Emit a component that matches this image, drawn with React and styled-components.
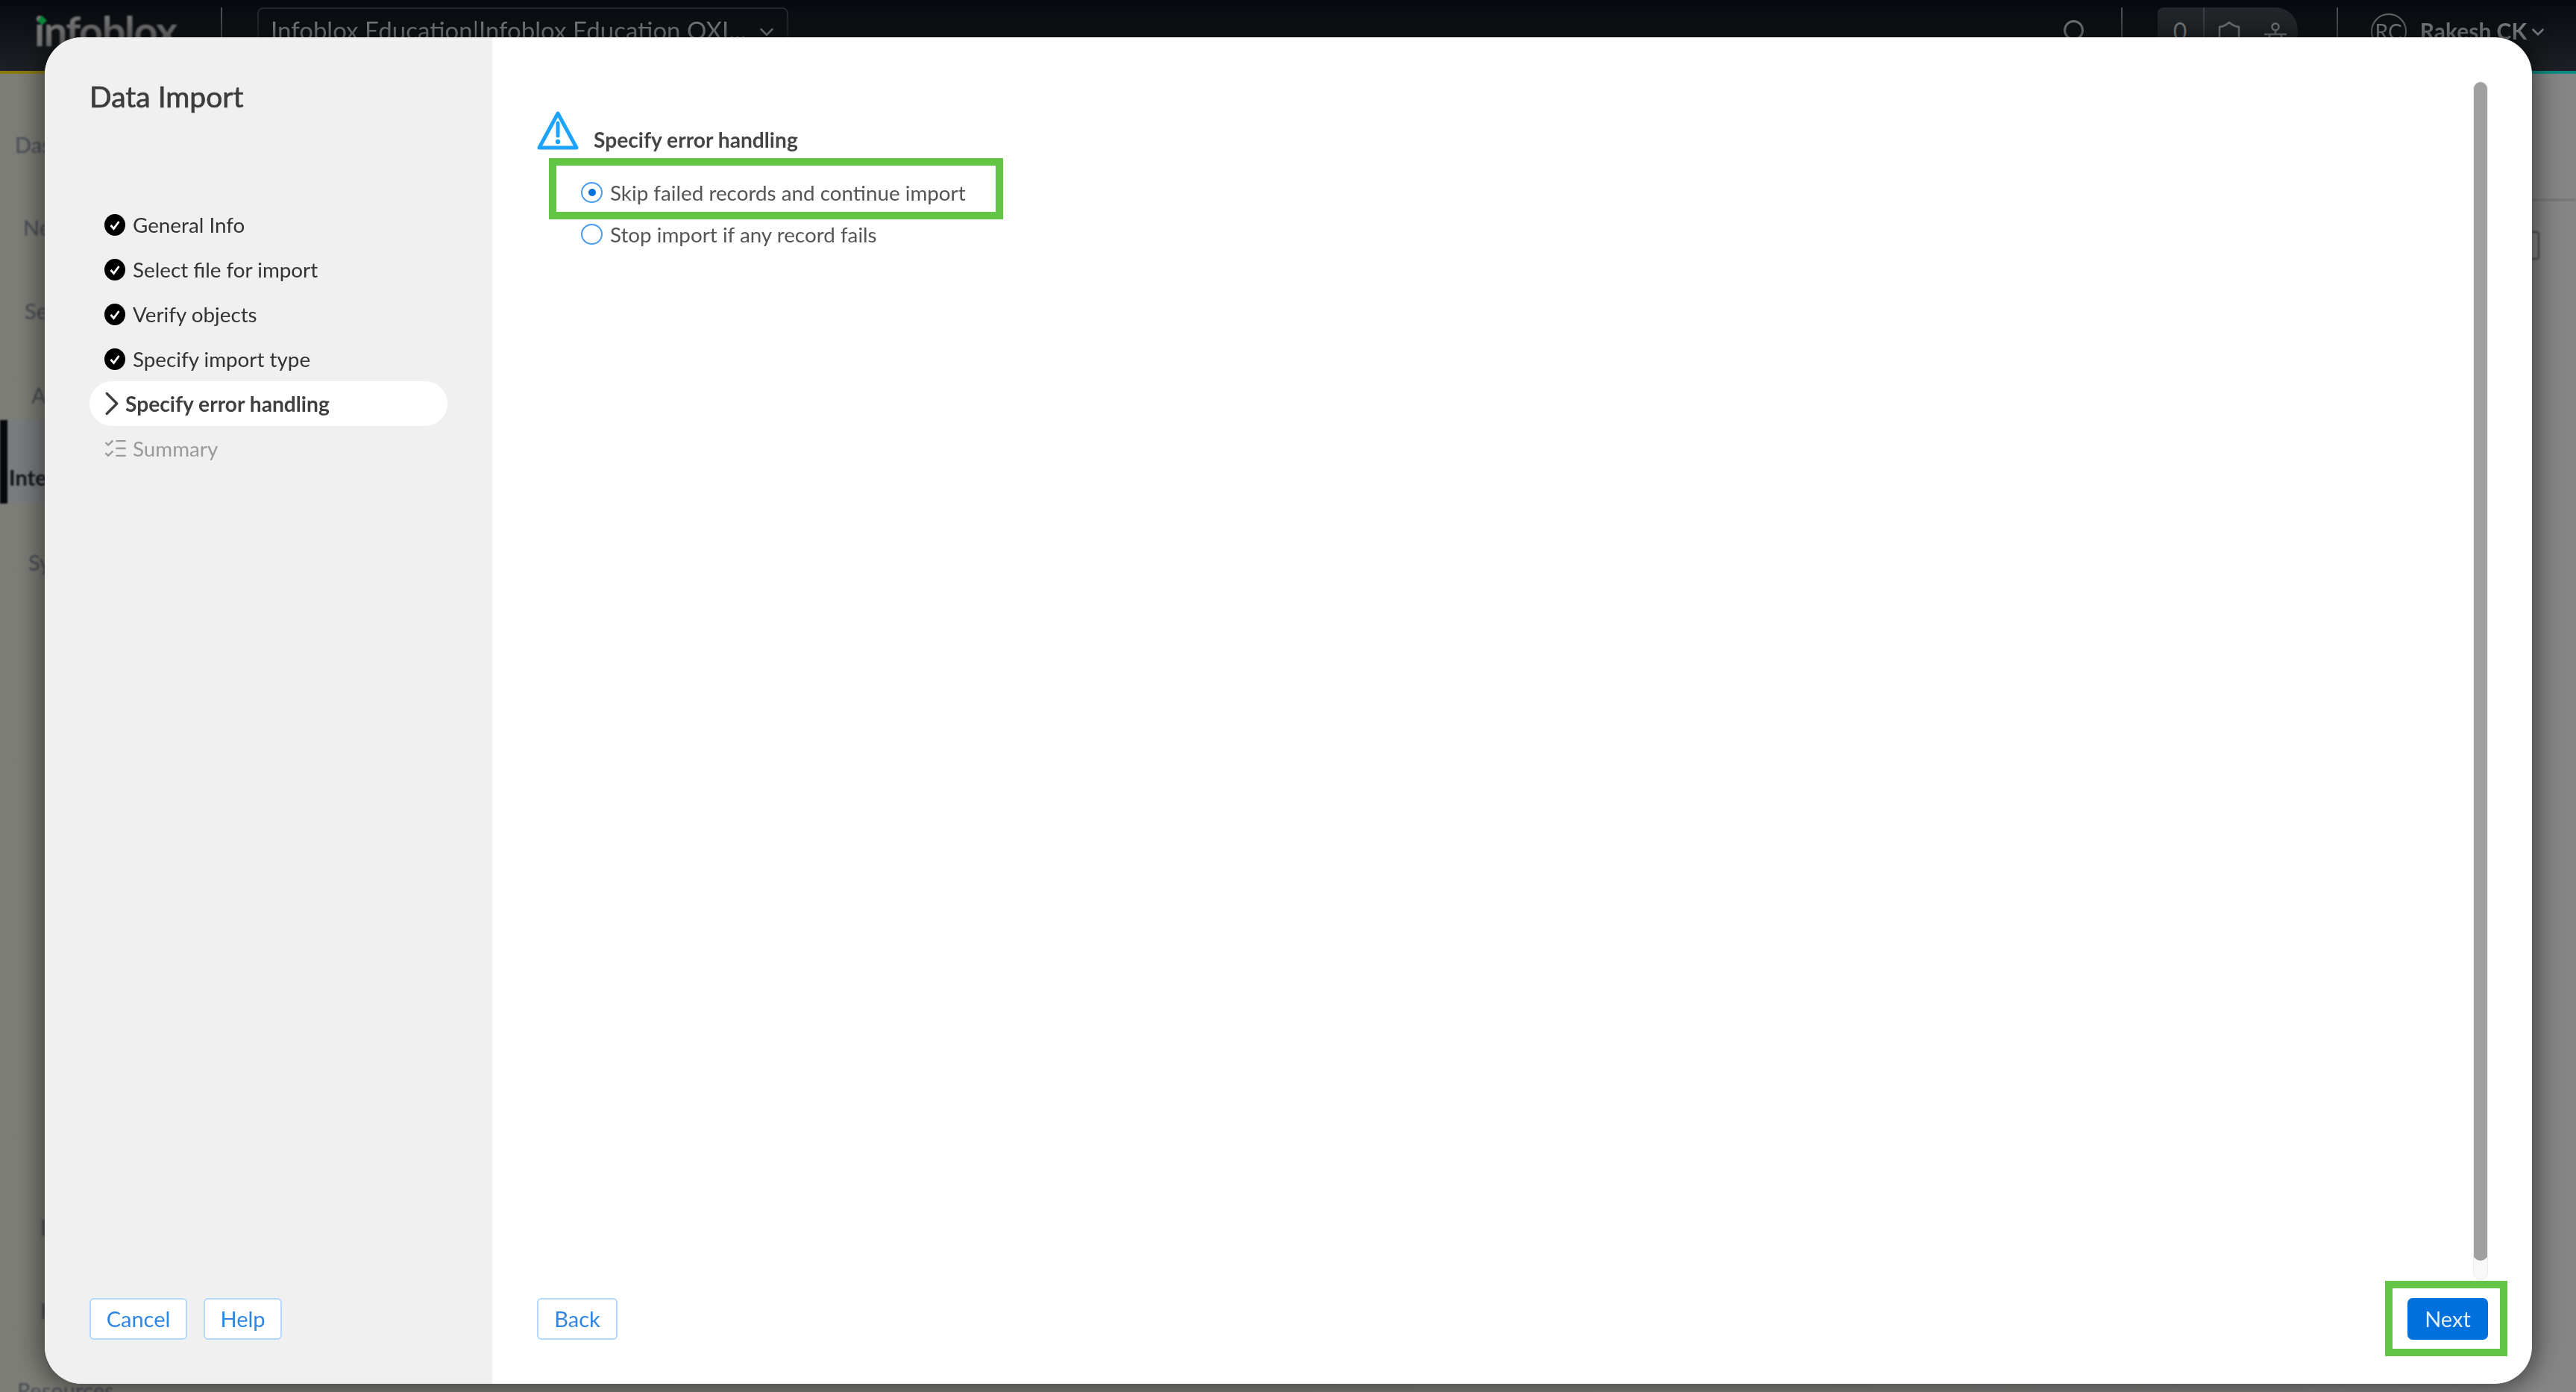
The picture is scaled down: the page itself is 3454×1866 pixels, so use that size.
import React from "react";
import styled, { createGlobalStyle } from "styled-components";
import { ChevronDown, ChevronRight, ListChecks, Search } from "lucide-react";

const Global = createGlobalStyle`
  html, body { margin: 0; padding: 0; background: #808080; }
  body { font-family: Lato, "Noto Sans", sans-serif; overflow: hidden; }
`;

const Page = styled.div`
  position: relative;
  width: 3454px;
  height: 1866px;
  overflow: hidden;
  display: flex;
  flex-direction: column;
  background: linear-gradient(90deg, #7e7e78 0%, #7f7f7b 50%, #868686 100%);
`;

const Header = styled.header`
  height: 95px;
  flex: none;
  display: flex;
  align-items: flex-start;
  box-sizing: content-box;
  color: #7d8084;
  background: linear-gradient(180deg, #06090d 0%, #1d2125 100%);
  border-bottom: 4px solid;
  border-image: linear-gradient(90deg, #8c7a12 0%, #6b8a50 50%, #0c8a86 100%) 1;
`;

const Logo = styled.div`
  position: relative;
  margin: 6px 0 0 46px;
  width: 250px;
  font-size: 56px;
  font-weight: 700;
  line-height: 70px;
  letter-spacing: -1.5px;
  color: #7a7a7a;
  filter: blur(0.8px);
`;

const LogoDot = styled.span`
  position: absolute;
  left: 6px;
  top: 17px;
  width: 9px;
  height: 9px;
  background: #0b8a3a;
  transform: rotate(45deg);
`;

const HeadDivider = styled.span`
  width: 2px;
  height: 42px;
  margin-top: 10px;
  flex: none;
  background: #4b4e52;
`;

const Selector = styled.div`
  margin: 10px 0 0 47px;
  width: 712px;
  height: 70px;
  box-sizing: border-box;
  padding: 8px 12px 0 16px;
  display: flex;
  justify-content: space-between;
  border: 2px solid #24282c;
  border-radius: 8px;
  font-size: 33px;
  line-height: 40px;
  white-space: nowrap;
  filter: blur(0.6px);
`;

const SelectorIcon = styled.span`
  display: flex;
  margin-top: 8px;
`;

const HeadRight = styled.div`
  margin-left: auto;
  display: flex;
  align-items: flex-start;
  filter: blur(0.6px);
`;

const HeadIcon = styled.span`
  display: flex;
  margin: ${(p) => p.$margin};
  color: #74777b;
`;

const Notifications = styled.div`
  margin: 10px 52px 0 47px;
  width: 188px;
  height: 70px;
  display: flex;
  align-items: flex-start;
  background: #22272b;
  border-radius: 8px 30px 0 0;
`;

const Count = styled.span`
  width: 63px;
  height: 70px;
  box-sizing: border-box;
  padding-top: 12px;
  text-align: center;
  font-size: 32px;
  border-right: 2px solid #3d4145;
`;

const Avatar = styled.span`
  margin: 18px 18px 0 44px;
  width: 48px;
  height: 48px;
  box-sizing: border-box;
  border: 2px solid #66696d;
  border-radius: 50%;
  display: flex;
  align-items: center;
  justify-content: center;
  font-size: 28px;
`;

const UserName = styled.span`
  margin-top: 21px;
  font-size: 30px;
  font-weight: 700;
  line-height: 40px;
  white-space: nowrap;
`;

const Body = styled.div`
  flex: 1;
  display: flex;
  min-height: 0;
  filter: blur(1px);
`;

const SideNav = styled.nav`
  width: 300px;
  flex: none;
  display: flex;
  flex-direction: column;
`;

const NavItem = styled.div`
  height: 40px;
  flex: none;
  display: flex;
  align-items: center;
  margin-top: ${(p) => p.$gap}px;
  padding-left: ${(p) => p.$indent}px;
  font-size: 29px;
  font-weight: 500;
  color: #4c5158;
  white-space: nowrap;
`;

const ActiveNav = styled.div`
  height: 112px;
  flex: none;
  box-sizing: border-box;
  margin-top: 14px;
  display: flex;
  align-items: center;
  background: #7a7d80;
  border-left: 10px solid #05080c;
  padding: 40px 0 0 2px;
  font-size: 29px;
  font-weight: 700;
  color: #12161b;
`;

const Content = styled.div`
  flex: 1;
  display: flex;
  flex-direction: column;
`;

const ContentBar = styled.div`
  height: 168px;
  flex: none;
  border-bottom: 2px solid #6c6c6c;
`;

const ContentTools = styled.div`
  display: flex;
  justify-content: flex-end;
  padding: 41px 49px 0 0;
`;

const ToolBox = styled.span`
  width: 40px;
  height: 34px;
  border: 2px solid #45484c;
  border-radius: 4px;
`;

const Modal = styled.div`
  position: absolute;
  left: 60px;
  top: 50px;
  width: 3335px;
  height: 1805px;
  display: flex;
  border-radius: 50px;
  overflow: hidden;
  background: #fff;
  box-shadow: 0 0 34px 6px rgba(0, 0, 0, 0.5);
`;

const Sidebar = styled.aside`
  width: 600px;
  flex: none;
  box-sizing: border-box;
  padding: 0 60px 59px;
  display: flex;
  flex-direction: column;
  background: #f0f0f0;
`;

const Title = styled.h1`
  margin: 54px 0 0;
  height: 50px;
  font-size: 39px;
  line-height: 50px;
  font-weight: 400;
  -webkit-text-stroke: 0.7px #3c3c3c;
  color: #3c3c3c;
  filter: blur(0.6px);
`;

const Steps = styled.ol`
  list-style: none;
  margin: 117px 0 0;
  padding: 0;
  display: flex;
  flex-direction: column;
  filter: blur(0.6px);
`;

const Step = styled.li`
  height: 60px;
  display: flex;
  align-items: center;
  gap: ${(p) => (p.$active ? 9 : 10)}px;
  padding-left: 20px;
  font-size: ${(p) => (p.$active ? 28.2 : 27.8)}px;
  font-weight: ${(p) => (p.$active ? 700 : 400)};
  color: ${(p) => (p.$todo ? "#9a9a9a" : p.$active ? "#3f3f3f" : "#333")};
  background: ${(p) => (p.$active ? "#fff" : "transparent")};
  border-radius: 30px;
  white-space: nowrap;
`;

const ActiveChevron = styled(ChevronRight)`
  margin: 0 -18px 0 -17px;
`;

const SummaryIcon = styled(ListChecks)`
  margin: 0 -4px 0 -2px;
  width: 34px;
`;

const SideFooter = styled.div`
  margin-top: auto;
  display: flex;
  gap: 22px;
`;

const OutlineButton = styled.button`
  height: 56px;
  width: ${(p) => p.$width}px;
  padding: 0 0 2px;
  background: #fff;
  border: 2px solid #b4d8fb;
  border-radius: 6px;
  font-family: inherit;
  font-size: 29px;
  color: #2f86e2;
`;

const SoftLabel = styled.span`
  display: inline-block;
  filter: blur(0.5px);
`;

const Main = styled.main`
  flex: 1;
  min-width: 0;
  box-sizing: border-box;
  padding: 0 59px 59px 60px;
  display: flex;
  flex-direction: column;
`;

const MainTop = styled.div`
  flex: 1;
  min-height: 0;
  display: flex;
  justify-content: space-between;
`;

const Form = styled.div`
  padding-top: 98px;
  display: flex;
  flex-direction: column;
  align-items: flex-start;
`;

const Heading = styled.div`
  display: flex;
  align-items: flex-end;
  gap: 20px;
  height: 54px;
`;

const HeadingText = styled.h2`
  margin: 0 0 -5px;
  font-size: 28.2px;
  line-height: 40px;
  font-weight: 700;
  color: #454545;
  filter: blur(0.6px);
`;

const Options = styled.div`
  margin: 36px 0 0 59px;
  display: flex;
  flex-direction: column;
  gap: 16px;
`;

const Option = styled.label`
  position: relative;
  height: 40px;
  display: flex;
  align-items: center;
  gap: 10px;
  font-size: 27.8px;
  color: #555;
  white-space: nowrap;
  ${(p) =>
    p.$highlight &&
    `&::after {
      content: "";
      position: absolute;
      inset: -26px -50px -16px -43px;
      border: 10px solid #62c546;
    }`}
`;

const Radio = styled.span`
  width: 29px;
  height: 28px;
  flex: none;
  box-sizing: border-box;
  display: flex;
  align-items: center;
  justify-content: center;
  border: 2px solid #4a9cf0;
  border-radius: 50%;
  &::before {
    content: "";
    width: 10px;
    height: 10px;
    border-radius: 50%;
    background: ${(p) => (p.$checked ? "#0070dd" : "transparent")};
  }
`;

const ScrollTrack = styled.div`
  width: 20px;
  height: 1607px;
  margin-top: 59px;
  box-sizing: border-box;
  background: #f8f8f8;
  border: 1px solid #ececec;
  border-radius: 10px;
  overflow: hidden;
`;

const ScrollThumb = styled.div`
  height: 1581px;
  margin: -1px;
  background: #a0a0a0;
  border-radius: 10px;
`;

const MainFooter = styled.div`
  flex: none;
  display: flex;
  justify-content: space-between;
`;

const NextButton = styled.button`
  position: relative;
  width: 108px;
  height: 56px;
  padding: 0 0 2px;
  background: #0070dc;
  border: none;
  border-radius: 7px;
  font-family: inherit;
  font-size: 29px;
  color: #e3eefa;
  &::after {
    content: "";
    position: absolute;
    inset: -23px -26px -22px -30px;
    border: 10px solid #62c546;
  }
`;

const CheckDone = () => (
  <svg width="28" height="29" viewBox="0 0 28 29">
    <ellipse cx="14" cy="14.5" rx="14" ry="14.5" fill="#000" />
    <path d="M8.5 15l4 4.5L19.5 10" fill="none" stroke="#fff" strokeWidth="2.8" />
  </svg>
);

const AlertTriangle = () => (
  <svg width="56" height="54" viewBox="0 0 56 54">
    <path d="M28 4 L53 50 H3 Z" fill="none" stroke="#1ea3ff" strokeWidth="5" strokeLinejoin="round" />
    <path d="M28 17v17" stroke="#1ea3ff" strokeWidth="5" strokeLinecap="round" />
    <circle cx="28" cy="42" r="3.2" fill="#1ea3ff" />
  </svg>
);

const ShieldOutline = () => (
  <svg width="30" height="46" viewBox="0 0 30 46" fill="none" stroke="currentColor" strokeWidth="2.6">
    <path d="M15 2 Q22 8 28 8 V24 Q28 36 15 44 Q2 36 2 24 V8 Q8 8 15 2 Z" strokeLinejoin="round" />
  </svg>
);

const NetworkNodes = () => (
  <svg width="32" height="46" viewBox="0 0 32 46" fill="none" stroke="currentColor" strokeWidth="2.6">
    <circle cx="16" cy="6" r="4.5" />
    <path d="M16 11v5M1 16h30M8 16v6M24 16v6" />
    <path d="M3 34l5-12 5 12M19 34l5-12 5 12" />
  </svg>
);

const doneSteps = ["General Info", "Select file for import", "Verify objects", "Specify import type"];

export default function App() {
  return (
    <Page>
      <Global />
      <Header>
        <Logo>
          <LogoDot />
          infoblox
        </Logo>
        <HeadDivider />
        <Selector>
          <span>Infoblox Education|Infoblox Education OXI...</span>
          <SelectorIcon><ChevronDown size={30} strokeWidth={2} /></SelectorIcon>
        </Selector>
        <HeadRight>
          <HeadIcon $margin="24px 44px 0 0"><Search size={36} strokeWidth={2} /></HeadIcon>
          <HeadDivider />
          <Notifications>
            <Count>0</Count>
            <HeadIcon $margin="18px 0 0 18px"><ShieldOutline /></HeadIcon>
            <HeadIcon $margin="20px 0 0 31px"><NetworkNodes /></HeadIcon>
          </Notifications>
          <HeadDivider />
          <Avatar>RC</Avatar>
          <UserName>Rakesh CK</UserName>
          <HeadIcon $margin="30px 38px 0 2px"><ChevronDown size={26} strokeWidth={2.4} /></HeadIcon>
        </HeadRight>
      </Header>
      <Body>
        <SideNav>
          <NavItem $gap={74} $indent={20}>Dashboard</NavItem>
          <NavItem $gap={71} $indent={31}>Networks</NavItem>
          <NavItem $gap={72} $indent={33}>Security</NavItem>
          <NavItem $gap={73} $indent={42}>Automation</NavItem>
          <ActiveNav>Integrations</ActiveNav>
          <NavItem $gap={58} $indent={38}>System</NavItem>
          <NavItem $gap={851} $indent={54}>Learn</NavItem>
          <NavItem $gap={72} $indent={54}>Help</NavItem>
          <NavItem $gap={25} $indent={62}>Users</NavItem>
          <NavItem $gap={2} $indent={23}>Resources</NavItem>
        </SideNav>
        <Content>
          <ContentBar />
          <ContentTools><ToolBox /></ContentTools>
        </Content>
      </Body>
      <Modal>
        <Sidebar>
          <Title>Data Import</Title>
          <Steps>
            {doneSteps.map((s) => (
              <Step key={s}><CheckDone />{s}</Step>
            ))}
            <Step $active><ActiveChevron size={54} strokeWidth={1.5} />Specify error handling</Step>
            <Step $todo><SummaryIcon size={34} strokeWidth={1.7} />Summary</Step>
          </Steps>
          <SideFooter>
            <OutlineButton $width={131}><SoftLabel>Cancel</SoftLabel></OutlineButton>
            <OutlineButton $width={105}><SoftLabel>Help</SoftLabel></OutlineButton>
          </SideFooter>
        </Sidebar>
        <Main>
          <MainTop>
            <Form>
              <Heading>
                <AlertTriangle />
                <HeadingText>Specify error handling</HeadingText>
              </Heading>
              <Options>
                <Option $highlight><Radio $checked /><SoftLabel>Skip failed records and continue import</SoftLabel></Option>
                <Option><Radio /><SoftLabel>Stop import if any record fails</SoftLabel></Option>
              </Options>
            </Form>
            <ScrollTrack><ScrollThumb /></ScrollTrack>
          </MainTop>
          <MainFooter>
            <OutlineButton $width={108}><SoftLabel>Back</SoftLabel></OutlineButton>
            <NextButton><SoftLabel>Next</SoftLabel></NextButton>
          </MainFooter>
        </Main>
      </Modal>
    </Page>
  );
}
